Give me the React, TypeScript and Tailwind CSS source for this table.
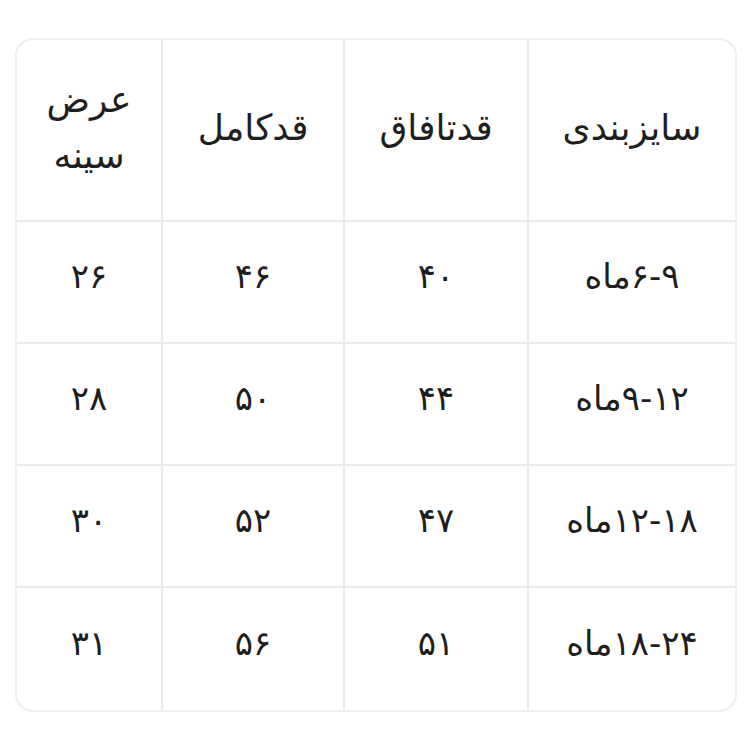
import React from "react";

const header = ["سایزبندی", "قدتافاق", "قدکامل"];
const rows = [
  ["۶-۹ماه", "۴۰", "۴۶", "۲۶"],
  ["۹-۱۲ماه", "۴۴", "۵۰", "۲۸"],
  ["۱۲-۱۸ماه", "۴۷", "۵۲", "۳۰"],
  ["۱۸-۲۴ماه", "۵۱", "۵۶", "۳۱"],
];

export default function App() {
  return (
    <div className="w-[750px] h-[750px] bg-white pt-[38px] pl-[15px]" style={{ fontFamily: '"DejaVu Sans", sans-serif' }}>
      <div
        dir="rtl"
        className="w-[722px] h-[674px] rounded-[18px] border-2 border-[#efefef] overflow-hidden grid grid-cols-[208px_184px_182px_1fr] grid-rows-[182px_repeat(4,122px)] text-[#1e1e1e]"
      >
        {header.map((h) => (
          <div key={h} className="flex items-center justify-center border-l-2 border-b-2 border-[#ebebeb] text-[36px] pb-[4px]">
            {h}
          </div>
        ))}
        <div className="flex flex-col items-center justify-center border-b-2 border-[#ebebeb] text-[36px] leading-[56px] pb-[4px]">
          <span>عرض</span>
          <span>سینه</span>
        </div>
        {rows.map((r, ri) =>
          r.map((c, ci) => (
            <div
              key={ri + "-" + ci}
              className={
                "flex items-center justify-center text-[34px] pb-[12px] border-[#ebebeb] " +
                (ci < 3 ? "border-l-2 " : "") +
                (ri < 3 ? "border-b-2" : "")
              }
            >
              {c}
            </div>
          ))
        )}
      </div>
    </div>
  );
}
